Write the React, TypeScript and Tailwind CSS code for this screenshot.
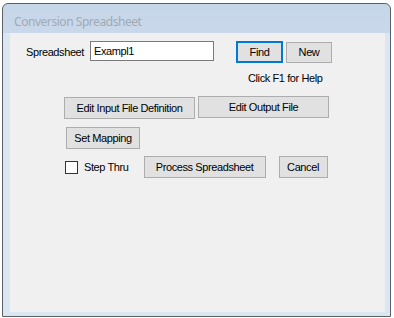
import React from "react";

const font = { fontFamily: '"Liberation Sans", Arial, sans-serif', letterSpacing: "-0.4px" };

function Btn({
  children,
  className = "",
  focused = false,
}: {
  children: React.ReactNode;
  className?: string;
  focused?: boolean;
}) {
  return (
    <div
      className={`flex items-center justify-center bg-[#e1e1e1] text-[11px] text-black ${
        focused ? "border-2 border-[#0078d7]" : "border border-[#adadad]"
      } ${className}`}
    >
      {children}
    </div>
  );
}

export default function App() {
  return (
    <div className="w-[394px] h-[318px] bg-white pt-[3px] pl-[2px]" style={font}>
      <div className="w-[389px] h-[314px] border border-[#5b6067] rounded-t-[6px] flex flex-col bg-gradient-to-b from-[#c6d6e9] via-[#d5e2f0] to-[#dbe6f3] overflow-hidden">
        <div
          className="h-[29px] pt-[10px] pl-[11px] text-[12px] leading-[16px] text-[#a0aab4]"
          style={{ fontFamily: '"Noto Sans", sans-serif', letterSpacing: "-0.45px" }}
        >
          Conversion Spreadsheet
        </div>
        <div className="flex-1 pl-[7px] pr-[5px] pb-[4px] bg-[#dbe6f3]">
          <div className="w-full h-full bg-[#f0f0f0] text-[11px] text-black">
            <div className="flex items-start pt-[8px]">
              <div className="ml-[16px] mt-[3px] w-[64px]">Spreadsheet</div>
              <div className="w-[124px] h-[20px] bg-white border border-[#7a7a7a] flex items-center pl-[3px]">Exampl1</div>
              <Btn focused className="ml-[22px] w-[47px] h-[22px]">Find</Btn>
              <Btn className="ml-[3px] mt-[1px] w-[46px] h-[21px]">New</Btn>
            </div>
            <div className="ml-[238px] mt-[7px] h-[16px]">Click F1 for Help</div>
            <div className="flex ml-[54px] mt-[11px]">
              <Btn className="w-[131px] h-[22px]">Edit Input File Definition</Btn>
              <Btn className="ml-[3px] w-[131px] h-[22px] -mt-[1px]">Edit Output File</Btn>
            </div>
            <div className="flex ml-[56px] mt-[8px]">
              <Btn className="w-[74px] h-[22px]">Set Mapping</Btn>
            </div>
            <div className="flex items-center ml-[55px] mt-[7px]">
              <div className="w-[13px] h-[13px] border border-[#333] bg-white" />
              <div className="ml-[6px]">Step Thru</div>
              <Btn className="ml-[15px] w-[122px] h-[22px]">Process Spreadsheet</Btn>
              <Btn className="ml-[13px] w-[49px] h-[22px]">Cancel</Btn>
            </div>
          </div>
        </div>
      </div>
    </div>
  );
}
